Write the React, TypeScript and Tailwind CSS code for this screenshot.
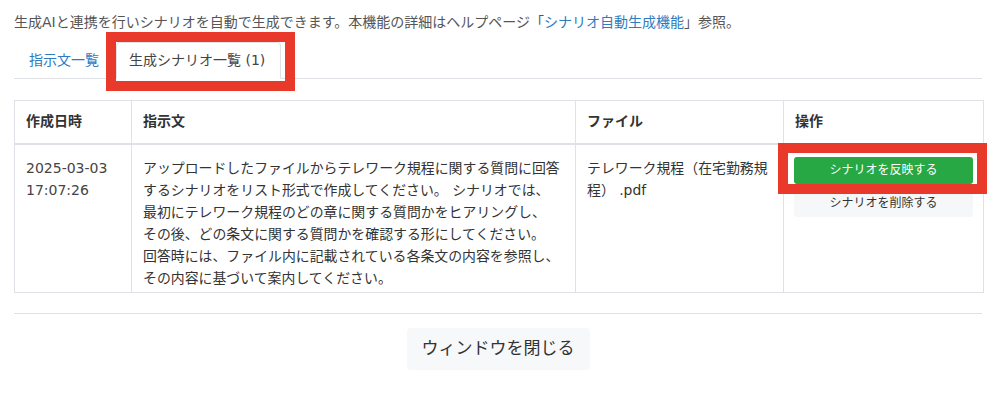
import React from 'react';

const FONT = '"DejaVu Sans", "Noto Sans CJK JP", sans-serif';

const instructionLines = [
  'アップロードしたファイルからテレワーク規程に関する質問に回答',
  'するシナリオをリスト形式で作成してください。 シナリオでは、',
  '最初にテレワーク規程のどの章に関する質問かをヒアリングし、',
  'その後、どの条文に関する質問かを確認する形にしてください。',
  '回答時には、ファイル内に記載されている各条文の内容を参照し、',
  'その内容に基づいて案内してください。',
];

export default function App() {
  return (
    <div
      className="relative w-[996px] h-[398px] bg-white px-[14px] pt-[12px] text-[#333]"
      style={{ fontFamily: FONT }}
    >
      {/* intro */}
      <p className="text-[14px] leading-[20px] text-[#555] whitespace-nowrap">
        生成AIと連携を行いシナリオを自動で生成できます。本機能の詳細はヘルプページ「
        <span className="text-[#2f7bbf]">シナリオ自動生成機能</span>」参照。
      </p>

      {/* tabs */}
      <div className="mt-[10px] flex border-b border-[#dee2e6]">
        <div className="h-[36px] pl-[15px] pr-[17px] flex items-center text-[14px] text-[#2f7bbf]">
          指示文一覧
        </div>
        <div className="-mb-px h-[37px] pl-[12px] pr-[15px] flex items-center bg-white border border-[#dee2e6] border-b-white rounded-t-[4px] text-[14px] text-[#444]">
          生成シナリオ一覧 (1)
        </div>
      </div>

      {/* table */}
      <table className="mt-[21px] w-[969px] border-collapse table-fixed text-[14px]">
        <colgroup>
          <col className="w-[117px]" />
          <col className="w-[444px]" />
          <col className="w-[208px]" />
          <col className="w-[200px]" />
        </colgroup>
        <thead>
          <tr className="h-[43px]">
            {['作成日時', '指示文', 'ファイル', '操作'].map((h) => (
              <th
                key={h}
                className="border border-[#dee2e6] border-b-2 px-[11px] text-left align-middle font-bold text-[#333]"
              >
                {h}
              </th>
            ))}
          </tr>
        </thead>
        <tbody>
          <tr className="h-[146px]">
            <td className="border border-[#dee2e6] px-[11px] pt-[12px] pb-[3px] align-top leading-[22px] text-[14px] text-[#444]">
              2025-03-03
              <br />
              17:07:26
            </td>
            <td className="border border-[#dee2e6] px-[11px] pt-[12px] pb-[3px] align-top leading-[22px] whitespace-nowrap text-[13.9px]">
              {instructionLines.map((l, i) => (
                <div key={i}>{l}</div>
              ))}
            </td>
            <td className="border border-[#dee2e6] px-[11px] pt-[12px] pb-[3px] align-top leading-[22px] whitespace-nowrap text-[13.9px]">
              テレワーク規程（在宅勤務規
              <br />
              程） .pdf
            </td>
            <td className="border border-[#dee2e6] px-[10px] pt-[12px] pb-[3px] align-top">
              <button
                type="button"
                className="w-full h-[27px] rounded-[3px] bg-[#28a745] text-white text-[12px] flex items-center justify-center"
              >
                シナリオを反映する
              </button>
              <button
                type="button"
                className="mt-[6px] w-full h-[27px] rounded-[3px] bg-[#f6f7f9] text-[#333] text-[12px] flex items-center justify-center"
              >
                シナリオを削除する
              </button>
            </td>
          </tr>
        </tbody>
      </table>

      <div className="mt-[20px] border-t border-[#dee2e6]" />

      <div className="mt-[14px] flex justify-center">
        <button
          type="button"
          className="h-[42px] px-[15px] rounded-[4px] bg-[#f7f8fa] text-[17px] text-[#333]"
        >
          ウィンドウを閉じる
        </button>
      </div>

      {/* annotation boxes */}
      <div className="absolute left-[106px] top-[32px] w-[189px] h-[59px] border-[10px] border-[#e8392b]" />
      <div className="absolute left-[778px] top-[143px] w-[209px] h-[51px] border-[10px] border-[#e8392b]" />
    </div>
  );
}
